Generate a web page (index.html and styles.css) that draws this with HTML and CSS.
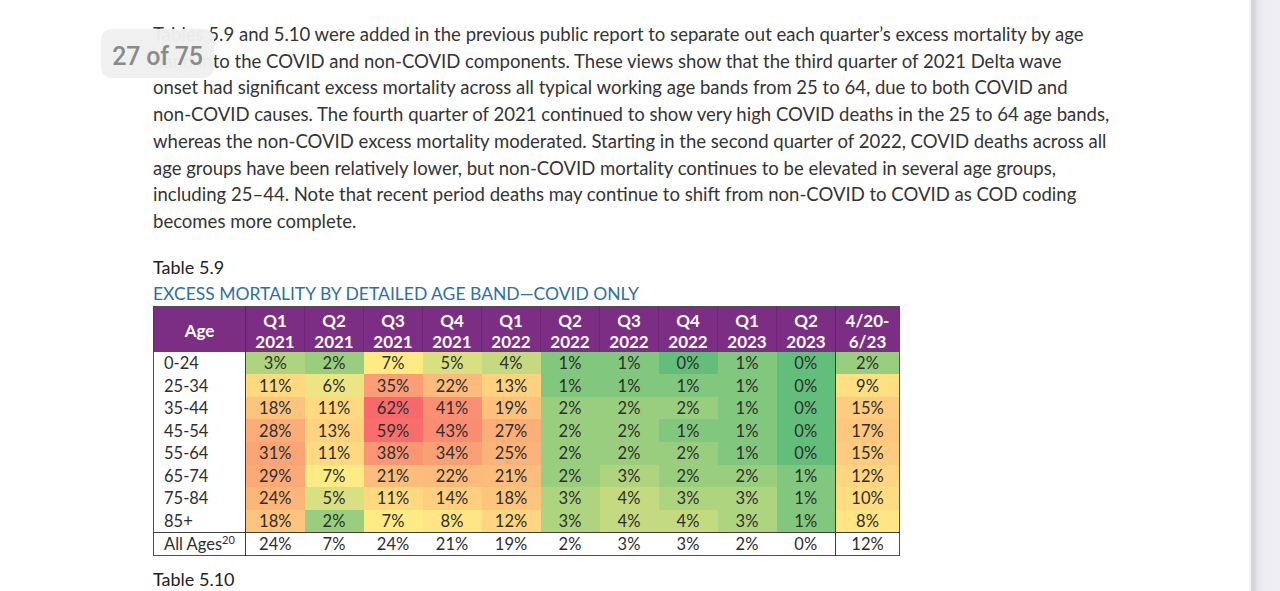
FILE: index.html
```html
<!DOCTYPE html>
<html lang="en">
<head>
<meta charset="utf-8">
<title>Report page 27</title>
<link rel="stylesheet" href="styles.css">
</head>
<body>
<div class="screen">
  <main class="page">
    <div class="content">
      <p class="para">
        <span class="ln">Tables 5.9 and 5.10 were added in the previous public report to separate out each quarter’s excess mortality by age</span>
        <span class="ln">band into the COVID and non-COVID components. These views show that the third quarter of 2021 Delta wave</span>
        <span class="ln">onset had significant excess mortality across all typical working age bands from 25 to 64, due to both COVID and</span>
        <span class="ln">non-COVID causes. The fourth quarter of 2021 continued to show very high COVID deaths in the 25 to 64 age bands,</span>
        <span class="ln">whereas the non-COVID excess mortality moderated. Starting in the second quarter of 2022, COVID deaths across all</span>
        <span class="ln">age groups have been relatively lower, but non-COVID mortality continues to be elevated in several age groups,</span>
        <span class="ln">including 25–44. Note that recent period deaths may continue to shift from non-COVID to COVID as COD coding</span>
        <span class="ln">becomes more complete.</span>
      </p>
      <p class="caption">Table 5.9</p>
      <h2 class="tbl-title">EXCESS MORTALITY BY DETAILED AGE BAND—COVID ONLY</h2>
      <table class="heat">
        <colgroup>
          <col class="c-age">
          <col class="c-q"><col class="c-q"><col class="c-q"><col class="c-q"><col class="c-q">
          <col class="c-q"><col class="c-q"><col class="c-q"><col class="c-q"><col class="c-q">
          <col class="c-last">
        </colgroup>
        <thead>
          <tr>
            <th class="age-h">Age</th>
            <th>Q1<br>2021</th><th>Q2<br>2021</th><th>Q3<br>2021</th><th>Q4<br>2021</th>
            <th>Q1<br>2022</th><th>Q2<br>2022</th><th>Q3<br>2022</th><th>Q4<br>2022</th>
            <th>Q1<br>2023</th><th>Q2<br>2023</th><th class="last">4/20-<br>6/23</th>
          </tr>
        </thead>
        <tbody>
          <tr><td class="age">0-24</td><td class="v">3%</td><td class="v">2%</td><td class="v">7%</td><td class="v">5%</td><td class="v">4%</td><td class="v">1%</td><td class="v">1%</td><td class="v">0%</td><td class="v">1%</td><td class="v">0%</td><td class="v last">2%</td></tr>
          <tr><td class="age">25-34</td><td class="v">11%</td><td class="v">6%</td><td class="v">35%</td><td class="v">22%</td><td class="v">13%</td><td class="v">1%</td><td class="v">1%</td><td class="v">1%</td><td class="v">1%</td><td class="v">0%</td><td class="v last">9%</td></tr>
          <tr><td class="age">35-44</td><td class="v">18%</td><td class="v">11%</td><td class="v">62%</td><td class="v">41%</td><td class="v">19%</td><td class="v">2%</td><td class="v">2%</td><td class="v">2%</td><td class="v">1%</td><td class="v">0%</td><td class="v last">15%</td></tr>
          <tr><td class="age">45-54</td><td class="v">28%</td><td class="v">13%</td><td class="v">59%</td><td class="v">43%</td><td class="v">27%</td><td class="v">2%</td><td class="v">2%</td><td class="v">1%</td><td class="v">1%</td><td class="v">0%</td><td class="v last">17%</td></tr>
          <tr><td class="age">55-64</td><td class="v">31%</td><td class="v">11%</td><td class="v">38%</td><td class="v">34%</td><td class="v">25%</td><td class="v">2%</td><td class="v">2%</td><td class="v">2%</td><td class="v">1%</td><td class="v">0%</td><td class="v last">15%</td></tr>
          <tr><td class="age">65-74</td><td class="v">29%</td><td class="v">7%</td><td class="v">21%</td><td class="v">22%</td><td class="v">21%</td><td class="v">2%</td><td class="v">3%</td><td class="v">2%</td><td class="v">2%</td><td class="v">1%</td><td class="v last">12%</td></tr>
          <tr><td class="age">75-84</td><td class="v">24%</td><td class="v">5%</td><td class="v">11%</td><td class="v">14%</td><td class="v">18%</td><td class="v">3%</td><td class="v">4%</td><td class="v">3%</td><td class="v">3%</td><td class="v">1%</td><td class="v last">10%</td></tr>
          <tr><td class="age">85+</td><td class="v">18%</td><td class="v">2%</td><td class="v">7%</td><td class="v">8%</td><td class="v">12%</td><td class="v">3%</td><td class="v">4%</td><td class="v">4%</td><td class="v">3%</td><td class="v">1%</td><td class="v last">8%</td></tr>
        </tbody>
        <tfoot>
          <tr><td class="age">All Ages<sup>20</sup></td><td>24%</td><td>7%</td><td>24%</td><td>21%</td><td>19%</td><td>2%</td><td>3%</td><td>3%</td><td>2%</td><td>0%</td><td class="last">12%</td></tr>
        </tfoot>
      </table>
      <p class="caption next">Table 5.10</p>
    </div>
    <div class="badge">27 of 75</div>
  </main>
  <aside class="rail"></aside>
</div>
<script src="script.js"></script>
</body>
</html>
```

FILE: styles.css
```css
html, body {
  margin: 0;
  padding: 0;
  background: #ffffff;
}
body {
  width: 1280px;
  height: 591px;
  overflow: hidden;
  font-family: Lato, "Open Sans", sans-serif;
  color: #333333;
}
.screen {
  display: flex;
  height: 591px;
}
.page {
  position: relative;
  flex: 1 1 auto;
  background: #ffffff;
}
.rail {
  flex: 0 0 29px;
  border-left: 2px solid #f2f2f2;
  background: linear-gradient(to right, #d6d5da 0, #d6d5da 4px, #e6e5ec 6px, #eeedf3 14px, #efeef4 100%);
}
.content {
  padding: 21px 0 0 153px;
}
.para {
  margin: 0;
  font-size: 18.55px;
  line-height: 26.7px;
  color: #343434;
}
.ln {
  display: block;
  white-space: nowrap;
}
.caption {
  margin: 21px 0 0 0;
  font-size: 18px;
  line-height: 22px;
  color: #222222;
}
.caption.next {
  margin-top: 12px;
}
.tbl-title {
  margin: 5px 0 0 0;
  font-size: 17.5px;
  font-weight: 400;
  line-height: 22px;
  color: #2d6fa4;
}
.heat {
  margin-top: 1px;
  border-collapse: collapse;
  border: 1px solid #505050;
  font-size: 16.5px;
  table-layout: fixed;
  width: 746px;
}
.c-age { width: 92px; }
.c-q { width: 59px; }
.c-last { width: 64px; }
.heat th {
  background: #7b2e84;
  color: #ffffff;
  font-weight: 700;
  font-size: 17px;
  line-height: 21px;
  height: 42px;
  padding: 3px 0 0 0;
  text-align: center;
  border-left: 1px solid #6d2776;
}
.heat th.age-h {
  border-right: 1px solid #3d3d3d;
}
.heat th.last {
  border-left: 1px solid #3d3d3d;
}
.heat td {
  padding: 0;
  height: 22.6px;
  line-height: 20px;
  text-align: center;
  color: #2e2e2e;
}
.heat td.age {
  text-align: left;
  padding-left: 10px;
  border-right: 1px solid #3d3d3d;
  background: #ffffff;
}
.heat td.last {
  border-left: 1px solid #3d3d3d;
}
.heat tfoot td {
  border-top: 1px solid #3d3d3d;
  background: #ffffff;
  height: 22px;
}
.heat sup {
  font-size: 11px;
  line-height: 0;
  vertical-align: 6px;
}
.badge {
  position: absolute;
  left: 101px;
  top: 29px;
  width: 113px;
  height: 43px;
  padding-top: 6px;
  border-radius: 10px;
  background: rgba(239, 239, 239, 0.97);
  color: #8a8a8a;
  font-family: Roboto, "Liberation Sans", sans-serif;
  font-weight: 500;
  font-size: 25px;
  letter-spacing: -0.2px;
  display: flex;
  align-items: center;
  justify-content: center;
}
```

FILE: script.js
```js
(function () {
  var green = [99, 190, 123];
  var yellow = [255, 235, 132];
  var red = [248, 105, 107];
  var mid = 7, max = 62;
  function mix(a, b, t) {
    return 'rgb(' + [0, 1, 2].map(function (i) {
      return Math.round(a[i] + (b[i] - a[i]) * t);
    }).join(',') + ')';
  }
  function color(v) {
    if (v <= mid) return mix(green, yellow, Math.pow(v / mid, 0.85));
    var t = Math.pow((v - mid) / (max - mid), 0.75);
    return mix(yellow, red, Math.min(1, t));
  }
  var cells = document.querySelectorAll('.heat td.v');
  for (var i = 0; i < cells.length; i++) {
    var v = parseFloat(cells[i].textContent);
    cells[i].style.backgroundColor = color(v);
  }
})();
```
